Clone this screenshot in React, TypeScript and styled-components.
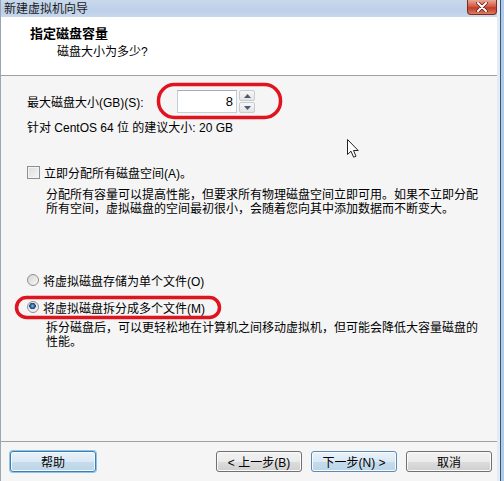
import React from 'react'
import styled, { createGlobalStyle } from 'styled-components'

const GlobalStyle = createGlobalStyle`
  html, body {
    margin: 0;
    padding: 0;
    background: #f5f5f5;
  }
  body {
    font-family: "Liberation Sans", "Noto Sans CJK SC", sans-serif;
    font-size: 12px;
    color: #000;
  }
`

const Screen = styled.div`
  position: relative;
  display: flex;
  width: 504px;
  height: 481px;
  overflow: hidden;
`

const Dialog = styled.div`
  width: 497px;
  display: flex;
  flex-direction: column;
  border-left: 1px solid #9aa6b4;
  box-sizing: border-box;
`

const Frame = styled.div`
  width: 7px;
  background: linear-gradient(to right, #e4ebf3 0 3px, #35557a 3px 4px, #b3cbe6 4px);
`

const TitleBar = styled.div`
  height: 17px;
  display: flex;
  align-items: flex-start;
  background: linear-gradient(#c9d9ec, #bcd0e8 60%, #c8d8ec);
`

const TitleText = styled.span`
  padding: 2px 0 0 3px;
  line-height: 14px;
  color: #1a1a1a;
`

const CloseButton = styled.div`
  margin-left: auto;
  width: 30px;
  height: 15px;
  box-sizing: border-box;
  border: 1px solid #7a2b22;
  border-top: none;
  border-radius: 0 0 4px 4px;
  background: linear-gradient(#e9a797, #d0533d 50%, #c23a24 55%, #dd7a62);
  display: flex;
  align-items: center;
  justify-content: center;
`

const Header = styled.div`
  height: 58px;
  background: #fff;
  border-bottom: 1px solid #a0a0a0;
  padding: 9px 0 0 29px;
  box-sizing: content-box;
  height: 49px;
`

const HeaderTitle = styled.div`
  font-size: 13px;
  font-weight: bold;
  line-height: 16px;
`

const HeaderSub = styled.div`
  margin-top: 2px;
  padding-left: 27px;
  line-height: 16px;
`

const Body = styled.div`
  height: 366px;
  box-sizing: border-box;
  border-bottom: 1px solid #a0a0a0;
  padding: 14px 0 0 26px;
  background: #f5f5f5;
`

const SizeRow = styled.div`
  display: flex;
  align-items: center;
  height: 23px;
`

const SizeLabel = styled.span`
  width: 150px;
`

const NumberBox = styled.div`
  width: 60px;
  height: 23px;
  box-sizing: border-box;
  border: 1px solid #c5cdd8;
  border-top-color: #abadb3;
  background: #fff;
  display: flex;
  align-items: center;
  justify-content: flex-end;
  padding-right: 3px;
  font-size: 13px;
`

const SpinColumn = styled.div`
  margin-left: 2px;
  display: flex;
  flex-direction: column;
  gap: 1px;
`

const SpinButton = styled.div`
  width: 16px;
  height: 11px;
  box-sizing: border-box;
  border: 1px solid #c8ccd2;
  border-radius: 2px;
  background: linear-gradient(#f7f7f7, #e4e4e4);
  display: flex;
  align-items: center;
  justify-content: center;
`

const Hint = styled.div`
  margin-top: 8px;
  line-height: 14px;
`

const OptionRow = styled.div<{ gapTop: number }>`
  margin-top: ${({ gapTop }) => gapTop}px;
  display: flex;
  align-items: center;
  height: 14px;
  gap: 4px;
`

const CheckBox = styled.span`
  width: 13px;
  height: 13px;
  box-sizing: border-box;
  border: 1px solid #8f8f8f;
  background: linear-gradient(135deg, #dcdcdc, #f6f6f6);
  box-shadow: inset 0 0 0 1px #f4f4f4;
`

const Radio = styled.span<{ checked?: boolean }>`
  width: 12px;
  height: 12px;
  box-sizing: border-box;
  border-radius: 50%;
  border: 1px solid #8e8f8f;
  background: ${({ checked }) =>
    checked
      ? 'radial-gradient(circle at 45% 40%, #8fc1f0 0, #2b5e9c 2px, #1c3f72 3px, #e6e6e6 3.5px, #f4f4f4 6px)'
      : 'linear-gradient(135deg, #d6d6d6, #f7f7f7)'};
`

const Desc = styled.div<{ gapTop: number }>`
  margin-top: ${({ gapTop }) => gapTop}px;
  padding-left: 19px;
  line-height: 14px;
  white-space: nowrap;
`

const Footer = styled.div`
  display: flex;
  align-items: flex-start;
  gap: 9px;
  padding: 9px 5px 0 9px;
`

const Button = styled.div<{ tone?: 'focus' | 'default' }>`
  width: 86px;
  height: 21px;
  box-sizing: border-box;
  border-radius: 3px;
  display: flex;
  align-items: center;
  justify-content: center;
  border: 1px solid ${({ tone }) => (tone === 'focus' ? '#3c7fb1' : tone === 'default' ? '#5b8ab3' : '#707070')};
  background: ${({ tone }) =>
    tone
      ? 'linear-gradient(#e8f2fa, #dae9f5 50%, #c6dcec 52%, #bcd4e6)'
      : 'linear-gradient(#f2f2f2, #ebebeb 50%, #dddddd 52%, #cfcfcf)'};
  box-shadow: ${({ tone }) => (tone === 'focus' ? '0 0 0 1px #8fc3e6, inset 0 0 0 1px #f3f9fd' : 'inset 0 0 0 1px #fafafa')};
`

const Spacer = styled.div`
  flex: 1;
`

const Annotation = styled.svg`
  position: absolute;
  overflow: visible;
`

const Pointer = styled.svg`
  position: absolute;
  left: 347px;
  top: 139px;
`

const Arrow = ({ up }: { up?: boolean }) => (
  <svg width="7" height="4" viewBox="0 0 7 4">
    <path d={up ? 'M0 4 L3.5 0 L7 4 Z' : 'M0 0 L3.5 4 L7 0 Z'} fill="#4a5a70" />
  </svg>
)

export default function App() {
  return (
    <Screen>
      <GlobalStyle />
      <Dialog>
        <TitleBar>
          <TitleText>新建虚拟机向导</TitleText>
          <CloseButton>
            <svg width="12" height="10" viewBox="0 0 12 10">
              <path d="M2 1 L10 9 M10 1 L2 9" stroke="#5a1a12" strokeWidth="3.4" strokeLinecap="round" />
              <path d="M2 1 L10 9 M10 1 L2 9" stroke="#fff" strokeWidth="2" strokeLinecap="round" />
            </svg>
          </CloseButton>
        </TitleBar>
        <Header>
          <HeaderTitle>指定磁盘容量</HeaderTitle>
          <HeaderSub>磁盘大小为多少?</HeaderSub>
        </Header>
        <Body>
          <SizeRow>
            <SizeLabel>最大磁盘大小(GB)(S):</SizeLabel>
            <NumberBox>8</NumberBox>
            <SpinColumn>
              <SpinButton>
                <Arrow up />
              </SpinButton>
              <SpinButton>
                <Arrow />
              </SpinButton>
            </SpinColumn>
          </SizeRow>
          <Hint>针对 CentOS 64 位 的建议大小: 20 GB</Hint>
          <OptionRow gapTop={30}>
            <CheckBox />
            <span>立即分配所有磁盘空间(A)。</span>
          </OptionRow>
          <Desc gapTop={9}>
            分配所有容量可以提高性能，但要求所有物理磁盘空间立即可用。如果不立即分配
            <br />
            所有空间，虚拟磁盘的空间最初很小，会随着您向其中添加数据而不断变大。
          </Desc>
          <OptionRow gapTop={57}>
            <Radio />
            <span>将虚拟磁盘存储为单个文件(O)</span>
          </OptionRow>
          <OptionRow gapTop={13}>
            <Radio checked />
            <span>将虚拟磁盘拆分成多个文件(M)</span>
          </OptionRow>
          <Desc gapTop={7}>
            拆分磁盘后，可以更轻松地在计算机之间移动虚拟机，但可能会降低大容量磁盘的
            <br />
            性能。
          </Desc>
        </Body>
        <Footer>
          <Button tone="focus">帮助</Button>
          <Spacer />
          <Button>&lt; 上一步(B)</Button>
          <Button tone="default">下一步(N) &gt;</Button>
          <Button>取消</Button>
        </Footer>
      </Dialog>
      <Frame />
      <Annotation style={{ left: 157, top: 83 }} width="125" height="36">
        <rect x="1.5" y="1.5" width="122" height="33" rx="16" fill="none" stroke="#e0141e" strokeWidth="3.5" />
      </Annotation>
      <Annotation style={{ left: 15, top: 296 }} width="206" height="23">
        <rect x="1.5" y="1.5" width="203" height="20" rx="10" fill="none" stroke="#e0141e" strokeWidth="3.5" />
      </Annotation>
      <Pointer width="13" height="20" viewBox="0 0 13 20">
        <path d="M0.5 0.5 L0.5 15.5 L4 12.2 L6.6 18.2 L9 17.2 L6.5 11.5 L11.2 11.5 Z" fill="#fff" stroke="#222" strokeWidth="1" />
      </Pointer>
    </Screen>
  )
}
